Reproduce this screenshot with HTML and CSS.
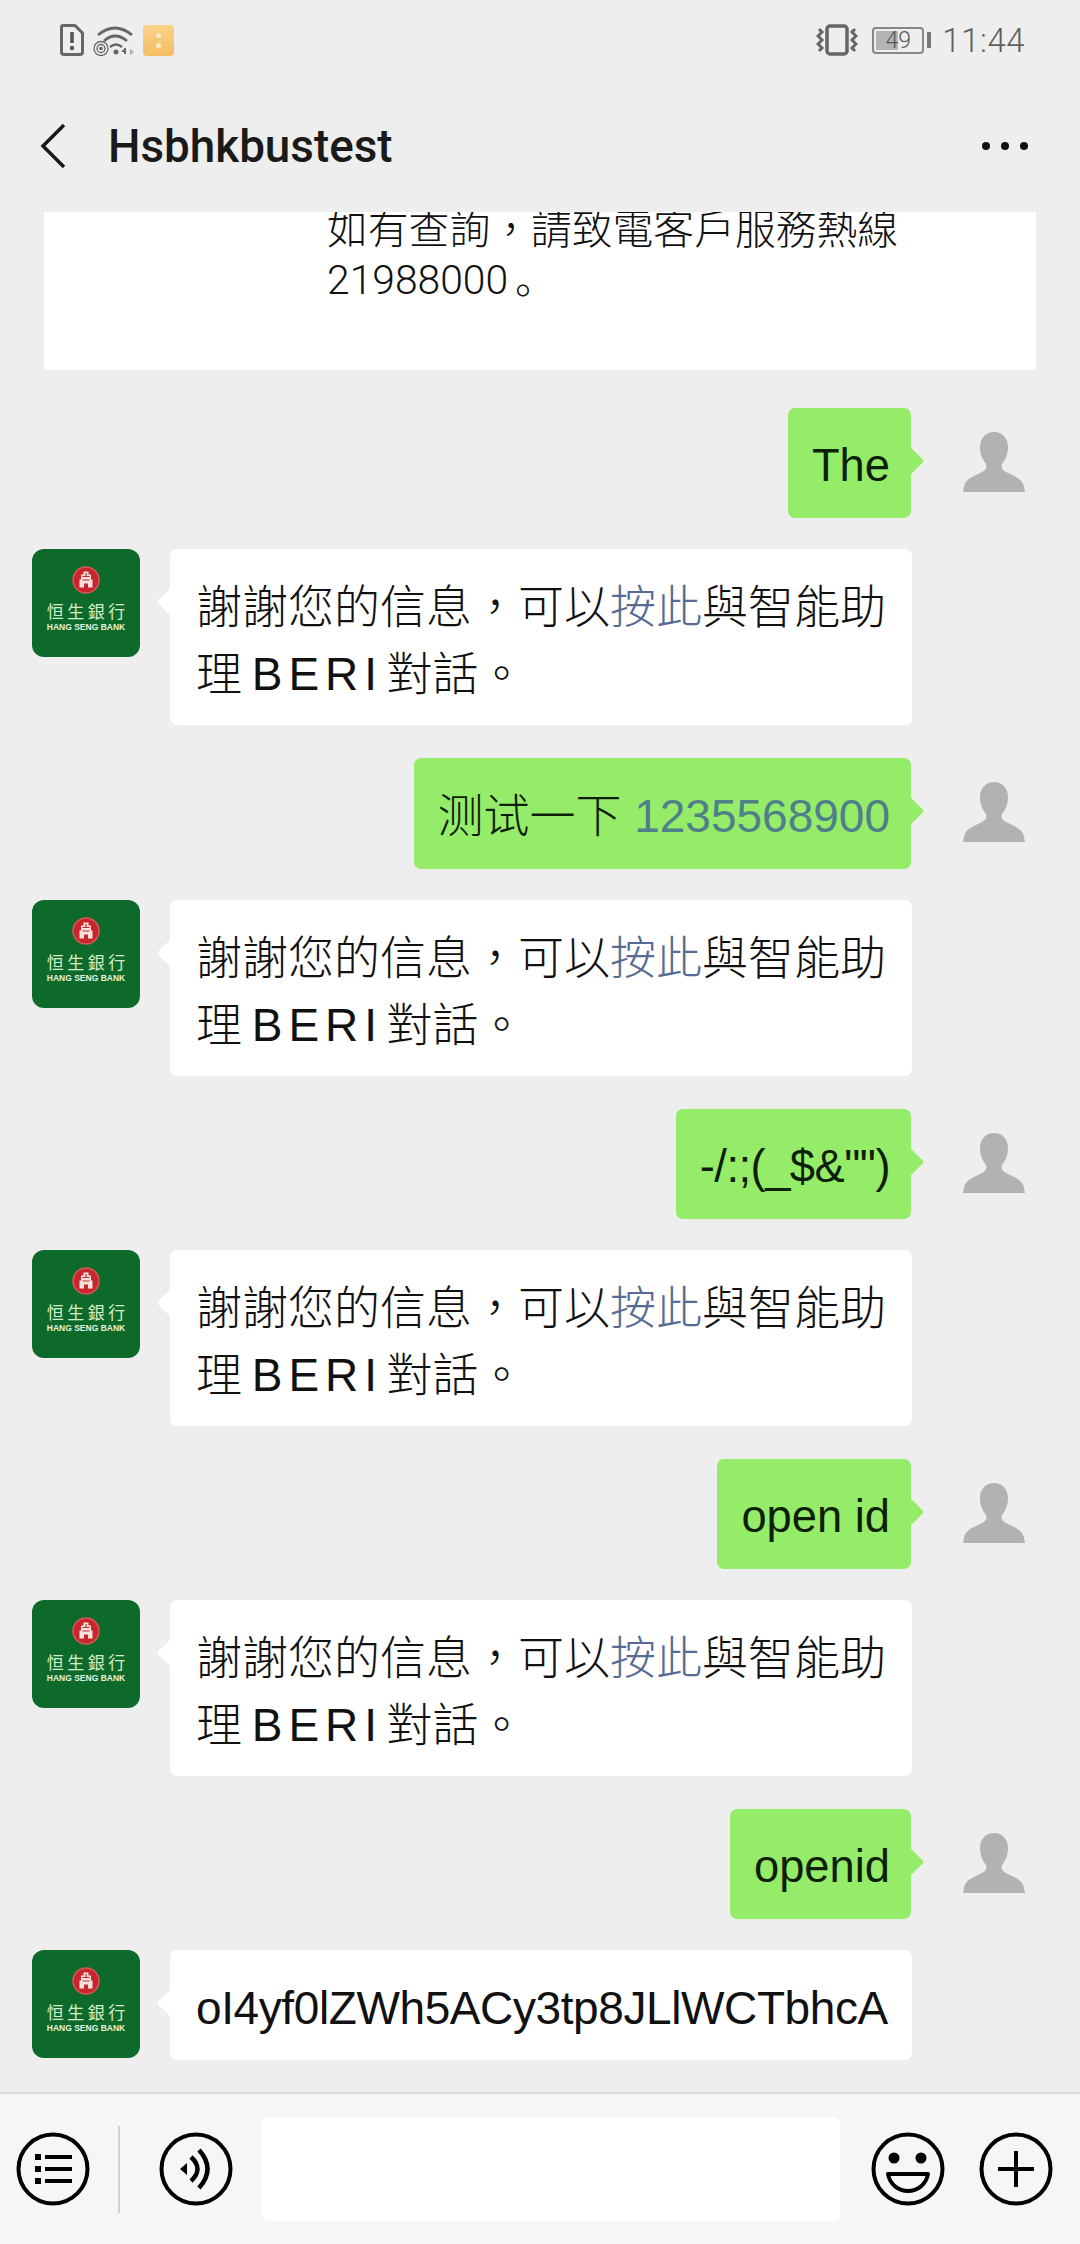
FILE: index.html
```html
<!DOCTYPE html>
<html lang="zh-Hant">
<head>
<meta charset="utf-8">
<title>Hsbhkbustest</title>
<link rel="stylesheet" href="styles.css">
</head>
<body>
<svg class="defs" width="0" height="0" aria-hidden="true">
  <symbol id="person" viewBox="0 0 108 108">
    <path fill="#b2b2b2" d="M54 24C46 24 40 30 40 39C40 47 43 52 46 56C47 60 46 62 42 64C34 68 25 71 24 79L23 84H85L84 79C83 71 74 68 66 64C62 62 61 60 62 56C65 52 68 47 68 39C68 30 62 24 54 24Z"/>
  </symbol>
  <symbol id="seal" viewBox="0 0 28 28">
    <circle cx="14" cy="14" r="13" fill="#c8262c" stroke="#d9565a" stroke-width="1.5"/>
    <path fill="#f6e3dc" d="M11.500 5.500h5v3h2.500v5h1.500v8h-4.500v-4h-4v4H7.500v-8H9v-5h2.500z"/>
    <path fill="#c8262c" d="M13.400 7h1.200v4h-1.200zM10.500 10h7v1h-7zM10.500 13.500h7v1h-7z"/>
  </symbol>
</svg>
<div class="phone">
  <header class="status">
    <div class="status-group">
      <svg class="ic-sim" viewBox="0 0 24 32"><path fill="none" stroke="#666" stroke-width="3" stroke-linejoin="round" d="M3 1.500H15L22.500 9V28Q22.500 30.500 20 30.500H4Q1.500 30.500 1.500 28V3Q1.500 1.500 3 1.500Z"/><path fill="none" stroke="#555" stroke-width="3.600" d="M12 8V19"/><circle cx="12" cy="24" r="2.200" fill="#555"/></svg>
      <svg class="ic-wifi" viewBox="0 0 41 32"><g fill="none" stroke="#666"><path stroke-width="2.800" d="M5 11Q22 -3 39 11"/><path stroke-width="2.800" d="M11 17Q22 7 34 17"/><path stroke-width="2.500" d="M17 23Q23 18 29 23"/><circle cx="8" cy="24.500" r="7" stroke-width="1.300"/><circle cx="8" cy="24.500" r="4" stroke-width="1.300"/></g><circle cx="8" cy="24.500" r="1.800" fill="#666"/><circle cx="23" cy="28" r="2.500" fill="#666"/><path fill="#666" d="M31 24h2v6h-2zM28 28l3-3v3z"/><path fill="#aaa" d="M37 25l4 3-4 3z"/></svg>
      <div class="ic-app"><span class="app-dot"></span><span class="app-dot"></span></div>
    </div>
    <div class="status-group status-right">
      <svg class="ic-vibrate" viewBox="0 0 42 32"><rect x="11" y="2" width="20" height="28" rx="3" fill="none" stroke="#666" stroke-width="3.500"/><path fill="none" stroke="#666" stroke-width="3" d="M3 5l3 3-4 4 4 4-4 4 4 4-3 3M39 5l-3 3 4 4-4 4 4 4-4 4 3 3"/></svg>
      <div class="battery">
        <div class="battery-body"><span class="battery-fill"></span><span class="battery-num">49</span></div>
        <span class="battery-nub"></span>
      </div>
      <span class="clock">11:44</span>
    </div>
  </header>

  <nav class="nav">
    <svg class="ic-back" viewBox="0 0 26 46"><path fill="none" stroke="#1a1a1a" stroke-width="3.500" d="M24 2L3 23L24 44"/></svg>
    <h1 class="title">Hsbhkbustest</h1>
    <div class="more"><span class="more-dot"></span><span class="more-dot"></span><span class="more-dot"></span></div>
  </nav>

  <main class="chat">
    <section class="card">
      <p class="card-text"><span class="line">如有查詢，請致電客戶服務熱線</span><span class="line"><span class="digits">21988000</span>。</span></p>
    </section>

    <div class="row me">
      <div class="bubble out">The</div>
      <svg class="avatar"><use href="#person"/></svg>
    </div>
    <div class="row them">
      <div class="logo"><svg class="seal"><use href="#seal"/></svg><span class="logo-zh">恒生銀行</span><span class="logo-en">HANG SENG BANK</span></div>
      <div class="bubble in"><span class="line">謝謝您的信息，可以<span class="link">按此</span>與智能助</span><span class="line">理 <span class="beri">B E R I</span> 對話。</span></div>
    </div>

    <div class="row me">
      <div class="bubble out"><span class="cjk">测试一下</span> <span class="tel">1235568900</span></div>
      <svg class="avatar"><use href="#person"/></svg>
    </div>
    <div class="row them">
      <div class="logo"><svg class="seal"><use href="#seal"/></svg><span class="logo-zh">恒生銀行</span><span class="logo-en">HANG SENG BANK</span></div>
      <div class="bubble in"><span class="line">謝謝您的信息，可以<span class="link">按此</span>與智能助</span><span class="line">理 <span class="beri">B E R I</span> 對話。</span></div>
    </div>

    <div class="row me">
      <div class="bubble out"><span class="punct">-/:;(_$&amp;"")</span></div>
      <svg class="avatar"><use href="#person"/></svg>
    </div>
    <div class="row them">
      <div class="logo"><svg class="seal"><use href="#seal"/></svg><span class="logo-zh">恒生銀行</span><span class="logo-en">HANG SENG BANK</span></div>
      <div class="bubble in"><span class="line">謝謝您的信息，可以<span class="link">按此</span>與智能助</span><span class="line">理 <span class="beri">B E R I</span> 對話。</span></div>
    </div>

    <div class="row me">
      <div class="bubble out">open id</div>
      <svg class="avatar"><use href="#person"/></svg>
    </div>
    <div class="row them">
      <div class="logo"><svg class="seal"><use href="#seal"/></svg><span class="logo-zh">恒生銀行</span><span class="logo-en">HANG SENG BANK</span></div>
      <div class="bubble in"><span class="line">謝謝您的信息，可以<span class="link">按此</span>與智能助</span><span class="line">理 <span class="beri">B E R I</span> 對話。</span></div>
    </div>

    <div class="row me">
      <div class="bubble out">openid</div>
      <svg class="avatar"><use href="#person"/></svg>
    </div>
    <div class="row them">
      <div class="logo"><svg class="seal"><use href="#seal"/></svg><span class="logo-zh">恒生銀行</span><span class="logo-en">HANG SENG BANK</span></div>
      <div class="bubble in"><span class="token">oI4yf0lZWh5ACy3tp8JLlWCTbhcA</span></div>
    </div>
  </main>

  <footer class="composer">
    <svg class="tool tool-list" viewBox="0 0 76 76"><circle cx="38" cy="38" r="34.500" fill="none" stroke="#000" stroke-width="4"/><path fill="#000" d="M20 20h6v6h-6zM20 32h6v6h-6zM20 44h6v6h-6zM30 21h27v4H30zM30 33h27v4H30zM30 45h27v4H30z" transform="translate(0 3)"/></svg>
    <span class="tool-divider"></span>
    <svg class="tool tool-voice" viewBox="0 0 76 76"><circle cx="38" cy="38" r="34.500" fill="none" stroke="#000" stroke-width="4"/><path fill="#000" d="M22 38l7-6v12z"/><path fill="none" stroke="#000" stroke-width="4.500" d="M33 26Q46 38 33 50M41 19Q58 38 41 57"/></svg>
    <div class="input"></div>
    <svg class="tool tool-emoji" viewBox="0 0 76 76"><circle cx="38" cy="38" r="34.500" fill="none" stroke="#000" stroke-width="4"/><circle cx="24" cy="27" r="5.500" fill="#000"/><circle cx="51" cy="27" r="5.500" fill="#000"/><path fill="none" stroke="#000" stroke-width="4" stroke-linejoin="round" d="M18 43H58C56 54 47 60 38 60C29 60 20 54 18 43Z"/></svg>
    <svg class="tool tool-plus" viewBox="0 0 76 76"><circle cx="38" cy="38" r="34.500" fill="none" stroke="#000" stroke-width="4"/><path fill="none" stroke="#000" stroke-width="4" d="M20 38H56M38 20V56"/></svg>
  </footer>
</div>
</body>
</html>
```
FILE: styles.css
```css
* { box-sizing: border-box; }
html, body { margin: 0; padding: 0; }
body { background: #eeeeee; font-family: "Liberation Sans", "Noto Sans CJK SC", sans-serif; color: #111; }
.defs { position: absolute; }
.phone { width: 1080px; height: 2244px; display: flex; flex-direction: column; background: #eeeeee; overflow: hidden; }
.line { display: block; white-space: nowrap; }

/* status bar */
.status { height: 80px; flex: none; display: flex; align-items: center; justify-content: space-between; padding: 0 55px 0 60px; }
.status-group { display: flex; align-items: center; gap: 9px; }
.status-right { gap: 11px; }
.ic-sim { width: 24px; height: 32px; }
.ic-wifi { width: 41px; height: 32px; }
.ic-app { width: 31px; height: 31px; border-radius: 4px; background: linear-gradient(#f9d389, #f5bd62); display: flex; flex-direction: column; align-items: center; justify-content: center; gap: 5px; }
.app-dot { width: 5px; height: 5px; border-radius: 50%; background: #fdeccb; }
.ic-vibrate { width: 42px; height: 32px; margin-right: 3px; }
.battery { display: flex; align-items: center; gap: 3px; }
.battery-body { position: relative; width: 52px; height: 27px; border: 2px solid #888; border-radius: 4px; display: flex; align-items: center; justify-content: center; overflow: hidden; }
.battery-fill { position: absolute; left: 2px; top: 2px; bottom: 2px; width: 22px; background: #b4b4b4; }
.battery-num { position: relative; font-family: Roboto, sans-serif; font-weight: 300; font-size: 23px; color: #555; }
.battery-nub { width: 4px; height: 16px; background: #777; }
.clock { font-family: Roboto, sans-serif; font-weight: 300; font-size: 33px; color: #5f5f5f; letter-spacing: 0.5px; }

/* navigation */
.nav { height: 132px; flex: none; display: flex; align-items: center; padding: 0 52px 0 40px; }
.ic-back { width: 26px; height: 46px; flex: none; }
.title { margin: 0 0 0 42px; flex: 1; font-family: Roboto, sans-serif; font-weight: 500; font-size: 45.800px; color: #1a1a1a; }
.more { display: flex; gap: 11px; }
.more-dot { width: 8px; height: 8px; border-radius: 50%; background: #111; }

/* chat */
.chat { flex: 1; min-height: 0; overflow: hidden; display: flex; flex-direction: column; }
.card { height: 158px; flex: none; margin: 0 44px; background: #fff; border-radius: 0 0 4px 4px; padding-left: 283px; overflow: hidden; }
.card-text { margin: -10px 0 0; font-family: "Noto Sans CJK SC", sans-serif; font-weight: 300; font-size: 40.800px; line-height: 50px; color: #111; white-space: nowrap; }
.digits { font-family: Roboto, sans-serif; margin-right: 7px; }

.row { display: flex; flex: none; padding: 0 32px; }
.row.me { justify-content: flex-end; gap: 29px; margin-top: 33px; }
.row.them { gap: 30px; margin-top: 31px; }
.card + .row.me { margin-top: 38px; }
.avatar { width: 108px; height: 108px; flex: none; }

.bubble { position: relative; font-family: "Liberation Sans", "Noto Sans CJK SC", sans-serif; font-size: 46px; line-height: 66px; border-radius: 7px; font-weight: 300; }
.bubble::after { content: ""; position: absolute; top: 43px; width: 20px; height: 20px; transform: rotate(45deg); border-radius: 2px; }
.out { background: #95ec69; white-space: nowrap; color: #0e1f08; font-size: 45.300px; padding: 25px 21px 19px 24px; }
.out::after { right: -9px; background: #95ec69; }
.in { background: #fff; width: 742px; padding: 25px 24px 17px 26px; line-height: 67px; }
.in::after { left: -9px; background: #fff; }
.link { color: #576b95; }
.cjk { font-size: 46px; }
.tel { color: #4f7f88; font-size: 46px; }
.punct { letter-spacing: -0.500px; }
.beri { letter-spacing: -3.400px; margin-left: -3px; }
.token { display: block; white-space: nowrap; letter-spacing: -0.400px; line-height: 66px; margin-bottom: 2px; }

/* logo */
.logo { width: 108px; height: 108px; flex: none; border-radius: 12px; background: #0d6a2b; display: flex; flex-direction: column; align-items: center; padding-top: 17px; color: #e7f3df; }
.seal { width: 28px; height: 28px; flex: none; }
.logo-zh { font-family: "Noto Sans CJK TC", sans-serif; font-weight: 400; font-size: 17px; line-height: 24px; letter-spacing: 3.500px; margin-top: 5px; margin-right: -3.500px; white-space: nowrap; color: #d4edc8; }
.logo-en { font-family: "Liberation Sans", sans-serif; font-weight: 700; font-size: 8.500px; line-height: 12px; white-space: nowrap; margin-top: -2px; }

/* composer */
.composer { height: 152px; flex: none; background: #f6f6f6; border-top: 2px solid #d8d8d8; display: flex; align-items: center; padding-left: 15px; }
.tool { width: 76px; height: 76px; flex: none; }
.tool-divider { width: 2px; height: 87px; background: #d2d2d2; margin-left: 27px; flex: none; }
.tool-voice { margin-left: 38px; }
.input { width: 578px; height: 104px; background: #fff; border-radius: 6px; margin-left: 28px; flex: none; }
.tool-emoji { margin-left: 30px; }
.tool-plus { margin-left: 32px; }
```
